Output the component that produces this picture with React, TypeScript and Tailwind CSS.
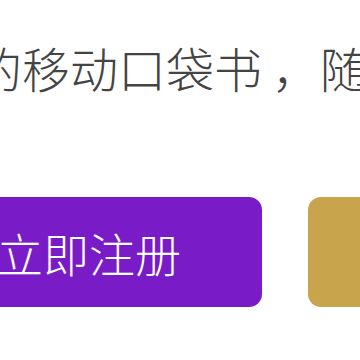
export default function App() {
  return (
    <main className="w-[360px] h-[360px] overflow-hidden bg-white font-['Noto_Sans_CJK_SC','Noto_Sans',sans-serif]">
      <p className="ml-[-26px] pt-[41px] whitespace-nowrap text-[48px] leading-[52px] font-light text-[#444]">
        的移动口袋书<span className="ml-[10px]">，</span>随时随地
      </p>
      <div className="flex gap-[46px] ml-[-84px] mt-[104px]">
        <button className="shrink-0 w-[346px] h-[110px] rounded-[13px] bg-[#7a1bc8] text-white text-[46px] font-light">
          立即注册
        </button>
        <button className="shrink-0 w-[346px] h-[110px] rounded-[13px] bg-[#c8a54d] text-white text-[46px] font-light">
          登录
        </button>
      </div>
    </main>
  );
}
